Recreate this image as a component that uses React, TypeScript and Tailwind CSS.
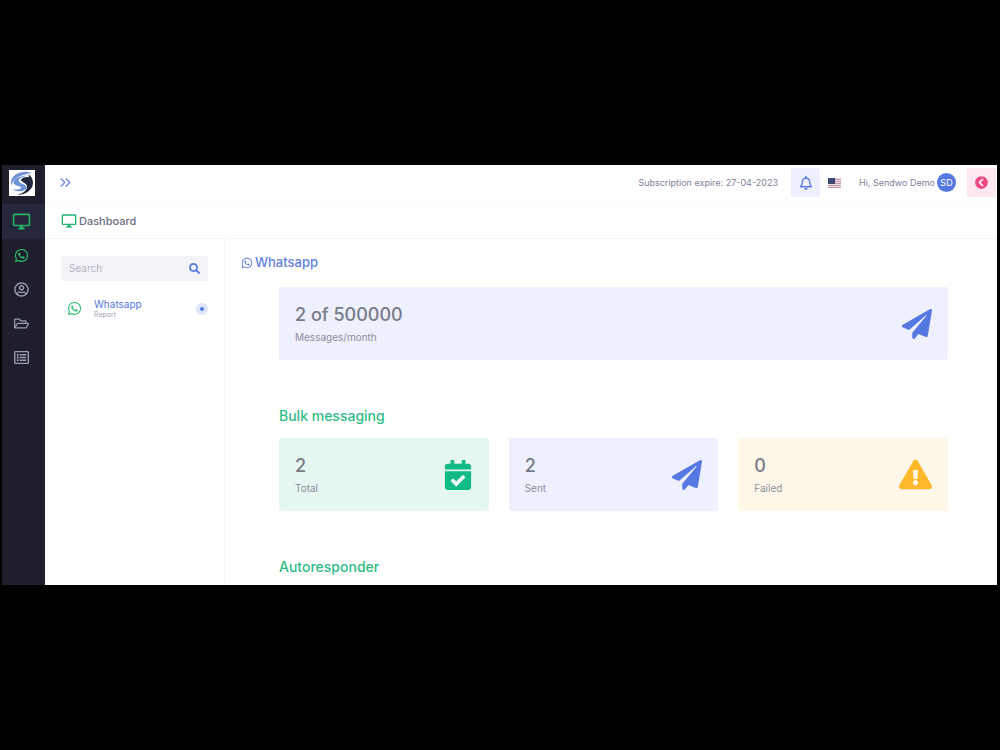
import React from 'react';
import { ChevronsRight } from 'lucide-react';
import {
  FaCalendarCheck,
  FaChevronCircleLeft,
  FaExclamationTriangle,
  FaPaperPlane,
  FaRegBell,
  FaRegFolderOpen,
  FaRegListAlt,
  FaRegUserCircle,
  FaSearch,
  FaWhatsapp,
} from 'react-icons/fa';
import { MdOutlineDesktopWindows } from 'react-icons/md';

const Logo: React.FC = () => (
  <svg viewBox="0 0 26 26" className="h-[26px] w-[26px] bg-white" aria-hidden="true">
    <path d="M23 3C15 0 5 3 2.500 9.500 1.500 12 2 14 3 15.500 2.500 9 11 5 23 3Z" fill="#6f93d6" />
    <path d="M19 5.500C11 6 5 8.500 4.500 12c-.3 2.500 3 3.700 6.500 4.500 1.500.4 1.500 1.500 0 2.200C9 19.700 6 20 3.200 19c3 2.500 9 3 12 1.200 3.500-2 2.300-4.700-.7-6-2.500-1-5-1.700-4.700-3.700C10 8.500 14 6.500 19 5.500Z" fill="#6f93d6" />
    <path d="M12 9.500c1.500-2 4.500-2.700 8-2.500l-.5-2.500C23.500 7 25 12 23.300 16.500 21 21.500 16 24.500 8 25c6-1.500 10-4.500 10-8.500 0-3.500-6-4-6-7Z" fill="#20243c" />
  </svg>
);

const Flag: React.FC = () => (
  <svg viewBox="0 0 13 10" className="h-[10px] w-[13px]" role="img" aria-label="English">
    <rect width="13" height="10" fill="#e9e2e8" />
    <path d="M0 1.500h13M0 3.500h13M0 5.500h13M0 7.500h13M0 9.500h13" stroke="#c993a0" strokeWidth="1" />
    <rect width="7" height="6" fill="#3d4a70" />
  </svg>
);

const navItems = [
  { label: 'Whatsapp', icon: FaWhatsapp, color: 'text-[#2cc46b]' },
  { label: 'Account', icon: FaRegUserCircle, color: 'text-[#9a9bb0]' },
  { label: 'Files', icon: FaRegFolderOpen, color: 'text-[#9a9bb0]' },
  { label: 'Lists', icon: FaRegListAlt, color: 'text-[#9a9bb0]' },
];

const Sidebar: React.FC = () => (
  <nav className="flex w-[43px] shrink-0 flex-col bg-[#1e1e2d]">
    <a href="#" aria-label="Home" className="flex h-[39px] items-center justify-center pr-1 pb-1">
      <Logo />
    </a>
    <a href="#" aria-label="Dashboard" className="flex h-[35px] items-center justify-center bg-[#25273c] pr-1 text-[#24b45f]">
      <MdOutlineDesktopWindows size={19} />
    </a>
    {navItems.map(({ label, icon: Icon, color }) => (
      <a
        key={label}
        href="#"
        aria-label={label}
        className={`flex h-[34px] items-center justify-center border-b border-[#222233] pr-1 ${color}`}
      >
        <Icon size={15} />
      </a>
    ))}
  </nav>
);

const Header: React.FC = () => (
  <header className="flex h-[39px] items-center border-b border-[#fafafc] pr-px pb-[3px] pl-3 text-[#7e8299]">
    <button aria-label="Expand menu" className="text-[#6a8be0]">
      <ChevronsRight size={17} />
    </button>
    <span className="ml-auto text-[9px] leading-4">Subscription expire: 27-04-2023</span>
    <button
      aria-label="Notifications"
      className="ml-[13px] flex h-[29px] w-[29px] items-center justify-center rounded-xs bg-[#eef0fd] text-[#5578e3]"
    >
      <FaRegBell size={14} />
    </button>
    <button className="ml-2">
      <Flag />
    </button>
    <button className="ml-[18px] flex items-center gap-0.5 text-[9px] leading-4">
      Hi, Sendwo Demo
      <span className="flex h-[19px] w-[19px] items-center justify-center rounded-full bg-[#5578e3] text-[9px] text-white">
        SD
      </span>
    </button>
    <button
      aria-label="Log out"
      className="ml-[11px] flex h-[29px] w-[29px] items-center justify-center rounded-xs bg-[#ffe8ef] text-[#ee4a7f]"
    >
      <FaChevronCircleLeft size={13} />
    </button>
  </header>
);

const SidePanel: React.FC = () => (
  <aside className="w-[180px] shrink-0 border-r border-[#f7f7fa] px-4 pt-[17px]">
    <label className="flex h-[25px] items-center rounded-xs bg-[#f3f4f8] pr-2 pl-2">
      <input
        type="text"
        aria-label="Search"
        placeholder="Search"
        className="w-full min-w-0 bg-transparent text-[10px] outline-none placeholder:text-[#b5b5c3]"
      />
      <FaSearch size={11} className="shrink-0 text-[#5578e3]" />
    </label>
    <a href="#" className="mt-3.5 flex h-[27px] items-center">
      <span className="flex w-[27px] justify-center text-[#2fbf76]">
        <FaWhatsapp size={15} />
      </span>
      <span className="ml-1.5 flex flex-col">
        <span className="text-[10px] leading-3 text-[#5578e3]">Whatsapp</span>
        <span className="text-[7px] leading-[10px] text-[#a1a5b7]">Report</span>
      </span>
      <span className="ml-auto flex h-3 w-3 items-center justify-center rounded-full bg-[#dfe5fa]">
        <span className="h-1 w-1 rounded-full bg-[#5578e3]" />
      </span>
    </a>
  </aside>
);

interface StatCardProps {
  value: string;
  label: string;
  background: string;
  children: React.ReactNode;
}

const StatCard: React.FC<StatCardProps> = ({ value, label, background, children }) => (
  <div className={`flex h-[73px] items-center justify-between rounded-xs px-4 ${background}`}>
    <div>
      <div className="text-lg leading-6 font-medium text-[#777a88]">{value}</div>
      <div className="mt-0.5 text-[10px] leading-4 text-[#8b8e9c]">{label}</div>
    </div>
    {children}
  </div>
);

const SectionTitle: React.FC<{ children: React.ReactNode }> = ({ children }) => (
  <h2 className="mt-11 h-6 text-sm leading-6 font-medium text-[#2dbd85]">{children}</h2>
);

const App: React.FC = () => (
  <div className="flex min-h-screen items-center bg-black pr-[3px] pl-0.5 font-['Inter',sans-serif]">
    <div className="flex w-full bg-white">
      <Sidebar />
      <div className="min-w-0 flex-1">
        <Header />
        <div className="flex h-[35px] items-center gap-0.5 border-b border-[#f6f6f9] px-4 text-[#6b6e7e]">
          <MdOutlineDesktopWindows size={16} className="text-[#20b573]" />
          <h1 className="text-[11px] leading-4 font-medium">Dashboard</h1>
        </div>
        <div className="flex">
          <SidePanel />
          <main className="min-w-0 flex-1 px-4 pt-3 pb-1.5">
            <h2 className="flex h-6 items-center gap-0.5 text-[13px] font-medium text-[#5f80dd]">
              <FaWhatsapp size={12} />
              Whatsapp
            </h2>
            <div className="mt-3 mr-[33px] ml-[38px]">
              <StatCard value="2 of 500000" label="Messages/month" background="bg-[#eef0fd]">
                <FaPaperPlane size={30} className="text-[#5578e3]" />
              </StatCard>
              <SectionTitle>Bulk messaging</SectionTitle>
              <div className="mt-2.5 grid grid-cols-3 gap-5">
                <StatCard value="2" label="Total" background="bg-[#e6f6f1]">
                  <FaCalendarCheck size={30} className="text-[#12bb86]" />
                </StatCard>
                <StatCard value="2" label="Sent" background="bg-[#eef0fd]">
                  <FaPaperPlane size={30} className="text-[#5578e3]" />
                </StatCard>
                <StatCard value="0" label="Failed" background="bg-[#fff8e8]">
                  <FaExclamationTriangle size={33} className="text-[#ffb82c]" />
                </StatCard>
              </div>
              <SectionTitle>Autoresponder</SectionTitle>
            </div>
          </main>
        </div>
      </div>
    </div>
  </div>
);

export default App;
